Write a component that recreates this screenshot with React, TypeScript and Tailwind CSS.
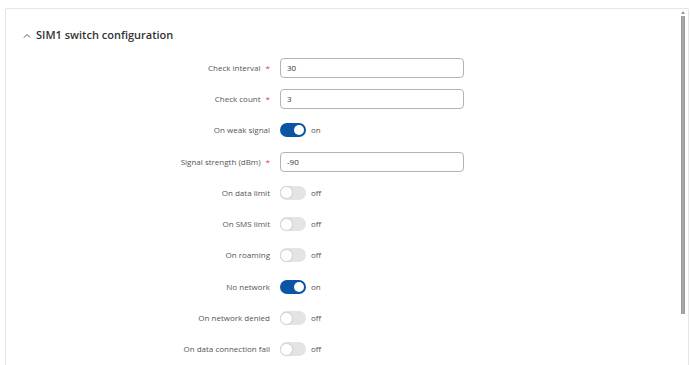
import React from "react";

type Row =
  | { kind: "input"; label: string; value: string; required?: boolean }
  | { kind: "toggle"; label: string; on: boolean };

const rows: Row[] = [
  { kind: "input", label: "Check interval", value: "30", required: true },
  { kind: "input", label: "Check count", value: "3", required: true },
  { kind: "toggle", label: "On weak signal", on: true },
  { kind: "input", label: "Signal strength (dBm)", value: "-90", required: true },
  { kind: "toggle", label: "On data limit", on: false },
  { kind: "toggle", label: "On SMS limit", on: false },
  { kind: "toggle", label: "On roaming", on: false },
  { kind: "toggle", label: "No network", on: true },
  { kind: "toggle", label: "On network denied", on: false },
  { kind: "toggle", label: "On data connection fail", on: false },
];

function Toggle({ on }: { on: boolean }) {
  return (
    <div className="flex items-center">
      {on ? (
        <div className="w-[26px] h-[14px] rounded-full bg-[#0b56a4] flex items-center justify-end pr-[2px]">
          <div className="w-[10px] h-[10px] rounded-full bg-white" />
        </div>
      ) : (
        <div className="w-[26px] h-[14px] rounded-full bg-[#e4e4e4] flex items-center">
          <div className="w-[13px] h-[13px] rounded-full bg-white border border-[#d6d6d6] shadow-[0_0_1px_rgba(0,0,0,0.15)]" />
        </div>
      )}
      <span className="ml-[5px] text-[8px] text-[#555] leading-none">{on ? "on" : "off"}</span>
    </div>
  );
}

export default function App() {
  return (
    <div
      className="w-[690px] h-[365px] bg-white overflow-hidden pl-[5px] pt-[8px]"
      style={{ fontFamily: "'Open Sans', 'Noto Sans', sans-serif" }}
    >
      <div className="w-[684px] h-[370px] border border-[#e6e6e6] rounded-[2px] flex">
        <div className="flex-1 flex flex-col">
          <div className="h-[42px] flex items-center pl-[17px] pt-[10px]">
            <svg width="8" height="6" viewBox="0 0 8 6" className="mr-[5px] mt-[1px]">
              <polyline points="1,4.5 4,1.5 7,4.5" fill="none" stroke="#555" strokeWidth="1" />
            </svg>
            <span className="text-[11px] font-semibold text-[#333]">
              SIM1 switch configuration
            </span>
          </div>
          <div className="flex flex-col pt-[1px]">
            {rows.map((r, i) => (
              <div key={i} className="h-[31.3px] flex items-center">
                <div className="w-[264px] text-right text-[8px] text-[#555] leading-none">
                  {r.label}
                  {r.kind === "input" && r.required && (
                    <span className="text-[#e0383a] ml-[5px]">*</span>
                  )}
                </div>
                <div className="ml-[10px]">
                  {r.kind === "input" ? (
                    <div className="w-[184px] h-[20px] rounded-[4px] border border-[#b3b3b3] px-[6px] flex items-center text-[8px] text-[#333]">
                      {r.value}
                    </div>
                  ) : (
                    <Toggle on={r.on} />
                  )}
                </div>
              </div>
            ))}
          </div>
        </div>
        <div className="w-[8px] flex flex-col items-center pt-[2px] mr-[1px]">
          <div className="w-0 h-0 border-l-[2px] border-r-[2px] border-b-[3px] border-l-transparent border-r-transparent border-b-[#999]" />
          <div className="mt-[2px] w-[4px] h-[298px] bg-[#a8a8a8] border-x border-[#9a9a9a]" />
        </div>
      </div>
    </div>
  );
}
